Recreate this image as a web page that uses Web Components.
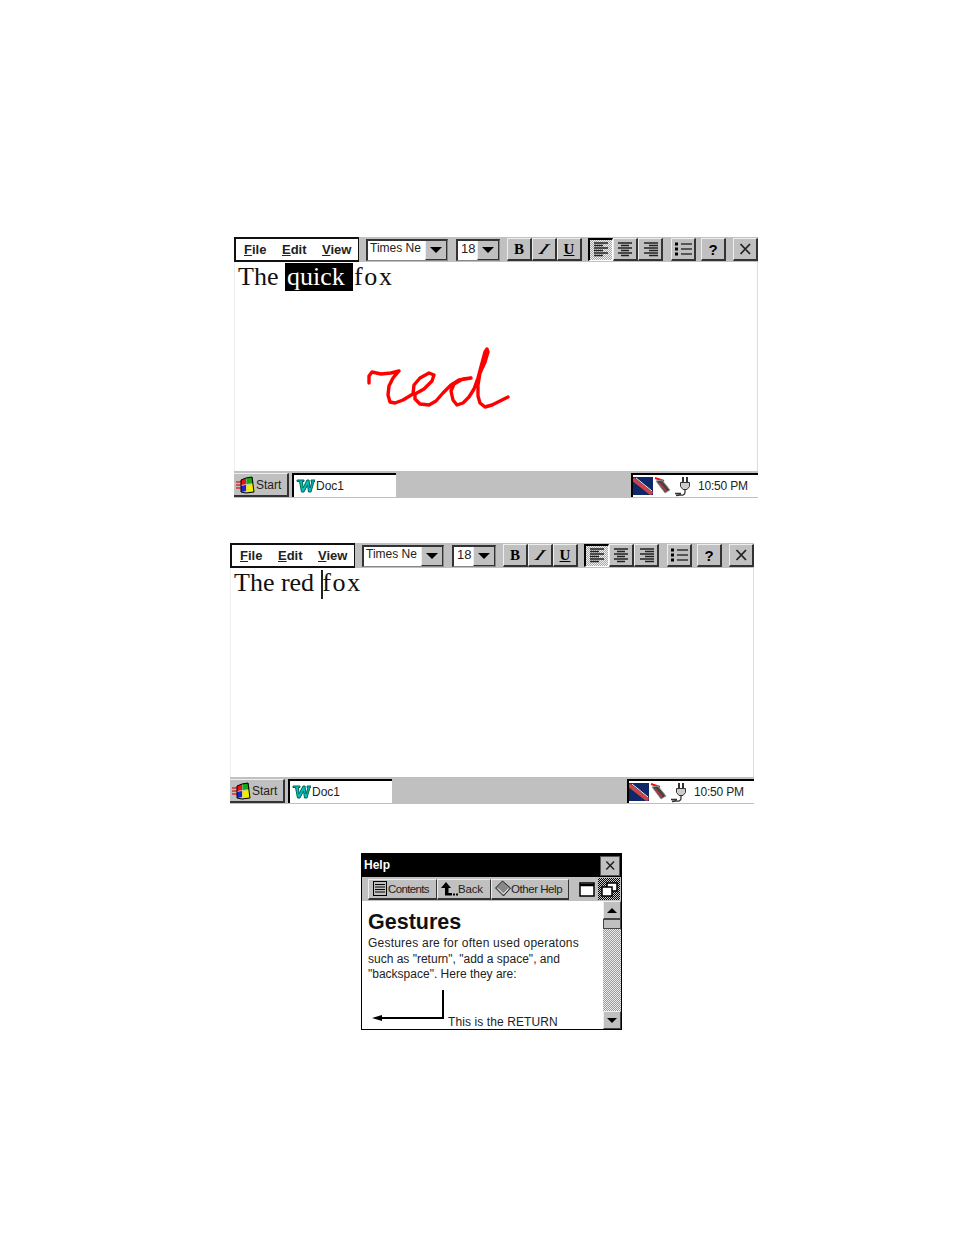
<!DOCTYPE html>
<html>
<head>
<meta charset="utf-8">
<title>Pen computing screens</title>
<style>
    html, body { margin: 0; background: #fff; }
    body { width: 954px; height: 1235px; overflow: hidden; font-family: "Liberation Sans", sans-serif; color: #000; }
    main { display: flex; flex-direction: column; padding-top: 237px; }
    pen-window { margin-left: 234px; }
    pen-window + pen-window { margin-left: 230px; margin-top: 45px; }
    help-window { margin-left: 361px; margin-top: 49px; }
    .sel { display: inline-block; width: 68px; height: 28px; line-height: 28px; background: #000; color: #fff; padding-left: 2px; box-sizing: border-box; vertical-align: baseline; }
    .fox { letter-spacing: 1.700px; margin-left: 1px; }
</style>
</head>
<body>
<main>
    <pen-window>
        <span>The <span class="sel">quick</span><span class="fox">fox</span></span>
        <svg slot="ink" width="524" height="209" viewBox="234 262 524 209" fill="none" stroke="#f00" stroke-width="3.400" stroke-linejoin="round" stroke-linecap="round">
            <path d="M368 383 L368 376 L371 372 L380 374 L390 373 L398 371 L392 378 L388 386 L387 395 L389 402 L394 403 L402 400 L412 394 L413 385 L419 378 L428 373 L433 375 L431 381 L423 389 L414 394 L414 399 L419 404 L428 405 L435 401 L442 393 L450 385 L458 380 L470 378 L462 379 L453 384 L450 391 L452 400 L456 405 L462 403 L468 397 L473 389 L477 378 L481 363 L484 352 L486 349 L487 352 L484 362 L479 373 L477 385 L477 396 L479 403 L484 407 L491 405 L499 401 L507 397"/>
        </svg>
    </pen-window>
    <pen-window>
        <span>The red<i-beam></i-beam><span class="fox" style="margin-left:0">fox</span></span>
    </pen-window>
    <help-window></help-window>
</main>

<script>
const glyphs = {
    left: '<path d="M4 4h14M4 6.500h9M4 9h14M4 11.500h9M4 14h14M4 16.500h9"/>',
    center: '<path d="M4 5h14M7 7.500h8M4 10h14M7 12.500h8M4 15h14M7 17.500h8"/>',
    right: '<path d="M5 5h14M10 7.500h9M5 10h14M10 12.500h9M5 15h14M10 17.500h9"/>',
    list: '<path d="M9 6h11M9 11h11M9 16h11" stroke="#333"/><path d="M3 4.500h3v3H3zM3 9.500h3v3H3zM3 14.500h3v3H3z" fill="#000" stroke="none"/>',
    close: '<path d="M6.500 6l9.500 10M16 6L6.500 16" stroke-width="1.800"/>'
};

function glyph(name) {
    return `<svg width="22" height="22" viewBox="0 0 22 22" fill="none" stroke="#222" stroke-width="1.300">${glyphs[name]}</svg>`;
}

class ToolButton extends HTMLElement {
    constructor() {
        super();
        this.attachShadow({ mode: "open" });
        this.shadowRoot.innerHTML = `
            <style>
                :host {
                    display: flex;
                    flex: none;
                    align-items: center;
                    justify-content: center;
                    box-sizing: border-box;
                    width: 25px;
                    height: 23px;
                    background: #c0c0c0;
                    border-top: 1px solid #eee;
                    border-left: 1px solid #eee;
                    border-right: 2px solid #333;
                    border-bottom: 2px solid #333;
                    font: bold 15px "Liberation Serif", serif;
                    line-height: 1;
                }
                :host([pressed]) {
                    border: 0 solid #000;
                    border-width: 2px 1px 1px 2px;
                    border-right-color: #fff;
                    border-bottom-color: #fff;
                    background: repeating-conic-gradient(#a8a8a8 0 25%, #eee 0 50%) 0 0 / 2px 2px;
                }
            </style>
            <slot></slot>
        `;
    }
}
customElements.define("tool-button", ToolButton);

class ComboBox extends HTMLElement {
    constructor() {
        super();
        this.attachShadow({ mode: "open" });
        this.shadowRoot.innerHTML = `
            <style>
                :host {
                    display: flex;
                    flex: none;
                    box-sizing: border-box;
                    height: 22px;
                    background: #fff;
                    border: 1px solid #888;
                    border-top: 2px solid #333;
                    border-left: 2px solid #333;
                    align-items: stretch;
                    font-family: "Liberation Sans", sans-serif;
                    font-size: 12px;
                    color: #222;
                }
                .value { flex: 1; padding-left: var(--pad, 2px); line-height: 15px; white-space: nowrap; overflow: hidden; }
                .arrow {
                    width: 20px;
                    background: #c0c0c0;
                    border-left: 1px solid #eee;
                    border-right: 1px solid #333;
                    border-bottom: 1px solid #333;
                    display: flex;
                    align-items: center;
                    justify-content: center;
                }
                .arrow::after {
                    content: "";
                    border: 6px solid transparent;
                    border-top: 6px solid #000;
                    border-bottom: 0;
                }
            </style>
            <div class="value"><slot></slot></div>
            <div class="arrow"></div>
        `;
    }
}
customElements.define("combo-box", ComboBox);

class TaskBar extends HTMLElement {
    constructor() {
        super();
        this.attachShadow({ mode: "open" });
        this.shadowRoot.innerHTML = `
            <style>
                :host {
                    display: flex;
                    align-items: center;
                    box-sizing: border-box;
                    height: 27px;
                    background: #c0c0c0;
                    padding-top: 1px;
                    font: 12px "Liberation Sans", sans-serif;
                    color: #222;
                }
                .start {
                    display: flex;
                    align-items: center;
                    gap: 1px;
                    box-sizing: border-box;
                    width: 55px;
                    height: 24px;
                    padding: 1px 0 0 1px;
                    border-top: 1px solid #eee;
                    border-right: 2px solid #333;
                    border-bottom: 2px solid #333;
                }
                .doc {
                    display: flex;
                    align-items: center;
                    gap: 1px;
                    box-sizing: border-box;
                    width: 104px;
                    height: 24px;
                    margin-left: 3px;
                    padding-left: 2px;
                    background: #fff;
                    border-top: 2px solid #000;
                    border-left: 2px solid #000;
                }
                .tray {
                    display: flex;
                    align-items: center;
                    box-sizing: border-box;
                    width: 127px;
                    height: 24px;
                    margin-left: auto;
                    background: #fff;
                    border-top: 2px solid #000;
                    border-left: 2px solid #000;
                }
                .clock { margin-left: 4px; letter-spacing: -0.2px; }
            </style>
            <div class="start">
                <svg width="20" height="18" viewBox="0 0 20 18">
                    <path d="M1 6h5M1 9h5M1 12h5" stroke="#c33" stroke-width="1.500"/>
                    <path d="M6 4l5-2v6l-5 1z" fill="#e11"/>
                    <path d="M11.500 2l6-1 1 6-7 1z" fill="#1a1"/>
                    <path d="M6 10l5-1v6l-5 1z" fill="#22c"/>
                    <path d="M11.500 9l7-1 1 7-8 1z" fill="#ee0"/>
                    <path d="M6 4l5-2 6-1 2 15-8 1-5-1z" fill="none" stroke="#000"/>
                </svg>
                <span>Start</span>
            </div>
            <div class="doc">
                <svg width="19" height="16" viewBox="0 0 19 16">
                    <path d="M1 2h7v1.500H6.500L7 10l4-8h2l1 8 2-6.500h-1V2h4v1.500h-1L15 14h-2.500l-1-7-3.500 7H5.500L3.500 3.500H1z" fill="#0bc" stroke="#064" stroke-width="1"/>
                </svg>
                <span>Doc1</span>
            </div>
            <div class="tray">
                <svg width="20" height="18" viewBox="0 0 20 18">
                    <rect width="20" height="18" fill="#102868"/>
                    <path d="M0 2l19 15" stroke="#c44" stroke-width="4"/>
                    <path d="M3 1l16 13" stroke="#eee" stroke-width="1"/>
                </svg>
                <svg width="18" height="18" viewBox="0 0 18 18" style="margin-left:1px">
                    <path d="M1 1l9 3" stroke="#e11" stroke-width="2"/>
                    <path d="M2 4l9 12 5-3-8-10z" fill="#444" stroke="#999"/>
                    <path d="M5 6l7 8" stroke="#c33" stroke-width="1.500"/>
                </svg>
                <svg width="20" height="21" viewBox="0 0 20 21" style="margin-left:2px" fill="none" stroke="#333">
                    <path d="M9 1v5M13 1v5" stroke-width="2"/>
                    <path d="M6.500 6.500h9v4l-2.500 3h-4l-2.500-3z" fill="#ccc"/>
                    <path d="M11 13.500v3c0 2.500-3 3-5 2.500l-4 .5M1 17.500h6" stroke-width="1.300"/>
                </svg>
                <span class="clock">10:50 PM</span>
            </div>
        `;
    }
}
customElements.define("task-bar", TaskBar);

class IBeam extends HTMLElement {
    constructor() {
        super();
        this.attachShadow({ mode: "open" });
        this.shadowRoot.innerHTML = `
            <style>
                :host {
                    display: inline-block;
                    width: 2px;
                    height: 29px;
                    margin: 0 -1px 0 7px;
                    background: #222;
                    vertical-align: -8px;
                }
            </style>
        `;
    }
}
customElements.define("i-beam", IBeam);

class PenWindow extends HTMLElement {
    constructor() {
        super();
        this.attachShadow({ mode: "open" });
        this.shadowRoot.innerHTML = `
            <style>
                :host {
                    display: block;
                    width: 524px;
                    height: 261px;
                }
                .toolbar {
                    display: flex;
                    align-items: center;
                    height: 25px;
                    background: #c0c0c0;
                }
                .menu {
                    display: flex;
                    flex: none;
                    box-sizing: border-box;
                    width: 125px;
                    height: 25px;
                    padding: 3px 0 0 8px;
                    background: #fff;
                    border: 2px solid #111;
                    border-right-width: 1px;
                    font: bold 13px "Liberation Sans", sans-serif;
                    color: #222;
                }
                .menu span { flex: none; width: 38px; white-space: nowrap; }
                .menu span + span { width: 40px; }
                .menu u { text-underline-offset: 1px; }
                .group { display: flex; flex: none; }
                .doc {
                    position: relative;
                    height: 209px;
                    box-sizing: border-box;
                    padding-left: 3px;
                    background: #fff;
                    border-right: 1px solid #ddd;
                    border-left: 1px solid #eee;
                    font: 26px/30px "Liberation Serif", serif;
                    color: #111;
                }
                slot[name="ink"]::slotted(svg) {
                    position: absolute;
                    left: 0;
                    top: 0;
                }
                .i { display: inline-block; transform: skewX(-38deg); font-weight: bold; font-size: 15px; }
            </style>
            <div class="toolbar">
                <div class="menu"><span><u>F</u>ile</span><span><u>E</u>dit</span><span><u>V</u>iew</span></div>
                <combo-box style="width:82px;margin-left:7px">Times Ne</combo-box>
                <combo-box style="width:44px;margin-left:8px;--pad:3px;font-size:13px">18</combo-box>
                <div class="group" style="margin-left:7px">
                    <tool-button>B</tool-button>
                    <tool-button><span class="i">I</span></tool-button>
                    <tool-button><u>U</u></tool-button>
                </div>
                <div class="group" style="margin-left:6px">
                    <tool-button pressed>${glyph("left")}</tool-button>
                    <tool-button>${glyph("center")}</tool-button>
                    <tool-button>${glyph("right")}</tool-button>
                </div>
                <tool-button style="margin-left:8px">${glyph("list")}</tool-button>
                <tool-button style="margin-left:5px;font:bold 15px 'Liberation Sans',sans-serif">?</tool-button>
                <tool-button style="margin-left:7px">${glyph("close")}</tool-button>
            </div>
            <div class="doc"><slot></slot><slot name="ink"></slot></div>
            <task-bar></task-bar>
        `;
    }
}
customElements.define("pen-window", PenWindow);

class HelpWindow extends HTMLElement {
    constructor() {
        super();
        this.attachShadow({ mode: "open" });
        this.shadowRoot.innerHTML = `
            <style>
                :host {
                    display: block;
                    box-sizing: border-box;
                    width: 261px;
                    height: 177px;
                    border: 1px solid #000;
                    font: 12px "Liberation Sans", sans-serif;
                    color: #222;
                }
                .title {
                    display: flex;
                    align-items: center;
                    justify-content: space-between;
                    box-sizing: border-box;
                    height: 23px;
                    background: #000;
                    color: #fff;
                    font-weight: bold;
                    font-size: 12px;
                    padding: 0 1px 0 2px;
                }
                .title span { margin-bottom: 2px; }
                .title button {
                    all: unset;
                    display: flex;
                    width: 20px;
                    height: 20px;
                    box-sizing: border-box;
                    background: #c0c0c0;
                    border: 1px solid #555;
                    align-items: center;
                    justify-content: center;
                }
                .bar {
                    display: flex;
                    align-items: center;
                    height: 24px;
                    padding-left: 6px;
                    background: #c0c0c0;
                }
                .tab {
                    display: flex;
                    flex: none;
                    align-items: center;
                    box-sizing: border-box;
                    height: 21px;
                    padding-left: 3px;
                    background: #c0c0c0;
                    border-top: 1px solid #eee;
                    border-left: 1px solid #eee;
                    border-right: 1px solid #333;
                    border-bottom: 2px solid #333;
                    white-space: nowrap;
                    font-size: 11.500px;
                }
                .view { display: flex; flex: none; align-items: center; justify-content: center; width: 22px; height: 22px; box-sizing: border-box; }
                .view.on { background: repeating-conic-gradient(#000 0 25%, #ccc 0 50%) 0 0 / 2px 2px; }
                .body { display: flex; height: 128px; }
                .content { flex: 1; padding: 9px 0 0 6px; position: relative; overflow: hidden; background: #fff; }
                h1 { margin: 0; font: bold 21.500px/24px "Liberation Sans", sans-serif; color: #111; }
                p { margin: 2px 0 0; line-height: 15.500px; }
                .arrow { position: absolute; left: 9px; top: 88px; }
                .caption { position: absolute; left: 86px; top: 114px; letter-spacing: 0.1px; white-space: nowrap; }
                .scroll {
                    display: flex;
                    flex-direction: column;
                    width: 18px;
                    background: repeating-conic-gradient(#999 0 25%, #eee 0 50%) 0 0 / 2px 2px;
                }
                .step {
                    display: flex;
                    align-items: center;
                    justify-content: center;
                    box-sizing: border-box;
                    height: 18px;
                    background: #c0c0c0;
                    border: 1px solid #444;
                    border-top-color: #eee;
                    border-left-color: #eee;
                }
                .step.up::after { content: ""; border: 5px solid transparent; border-bottom: 5px solid #000; border-top: 0; }
                .step.down::after { content: ""; border: 5px solid transparent; border-top: 5px solid #000; border-bottom: 0; }
                .thumb { height: 10px; background: #c0c0c0; border: 1px solid #444; box-sizing: border-box; }
            </style>
            <div class="title">
                <span>Help</span>
                <button>${glyph("close").replace('width="22" height="22"', 'width="19" height="19"')}</button>
            </div>
            <div class="bar">
                <div class="tab" style="width:69px;letter-spacing:-0.65px">
                    <svg width="16" height="17" viewBox="0 0 16 17" fill="none" stroke="#000"><rect x="1.500" y="1.500" width="13" height="14"/><path d="M3 4.500h10M3 7h10M3 9.500h10M3 12h10"/></svg>
                    <span>Contents</span>
                </div>
                <div class="tab" style="width:54px;letter-spacing:-0.2px">
                    <svg width="17" height="14" viewBox="0 0 17 14"><path d="M5 0l5 6H7.500v5H11v2.500H4V6H0z" fill="#000"/><path d="M12 11.500h2v2h-2zM15 11.500h2v2h-2z" fill="#000"/></svg>
                    <span>Back</span>
                </div>
                <div class="tab" style="width:78px;letter-spacing:-0.45px">
                    <svg width="16" height="17" viewBox="0 0 16 17"><path d="M7.500 1l8 7-7 8-8-8z" fill="#888" stroke="#222"/><path d="M3 8.500l5.500 5.500 5-5.500" fill="none" stroke="#fff"/></svg>
                    <span>Other Help</span>
                </div>
                <div class="view" style="margin-left:7px">
                    <svg width="16" height="15" viewBox="0 0 16 15" fill="#fff" stroke="#000" stroke-width="1.500"><rect x="1" y="1" width="14" height="13"/><path d="M1 3h14" stroke-width="2.500"/></svg>
                </div>
                <div class="view on">
                    <svg width="17" height="15" viewBox="0 0 17 15" fill="#fff" stroke="#000" stroke-width="1.500"><rect x="6" y="1" width="10" height="8"/><rect x="1" y="5" width="10" height="9"/></svg>
                </div>
            </div>
            <div class="body">
                <div class="content">
                    <h1>Gestures</h1>
                    <p><span style="letter-spacing:.22px">Gestures are for often used operatons</span><br>such as "return", "add a space", and<br>"backspace". Here they are:</p>
                    <svg class="arrow" width="74" height="32" viewBox="0 0 74 32" fill="none" stroke="#000" stroke-width="2">
                        <path d="M72 1v28H6"/><path d="M1 29l10-3v6z" fill="#000" stroke="none"/>
                    </svg>
                    <span class="caption">This is the RETURN</span>
                </div>
                <div class="scroll">
                    <div class="step up"></div>
                    <div class="thumb"></div>
                    <div style="flex:1"></div>
                    <div class="step down"></div>
                </div>
            </div>
        `;
    }
}
customElements.define("help-window", HelpWindow);
</script>
</body>
</html>
